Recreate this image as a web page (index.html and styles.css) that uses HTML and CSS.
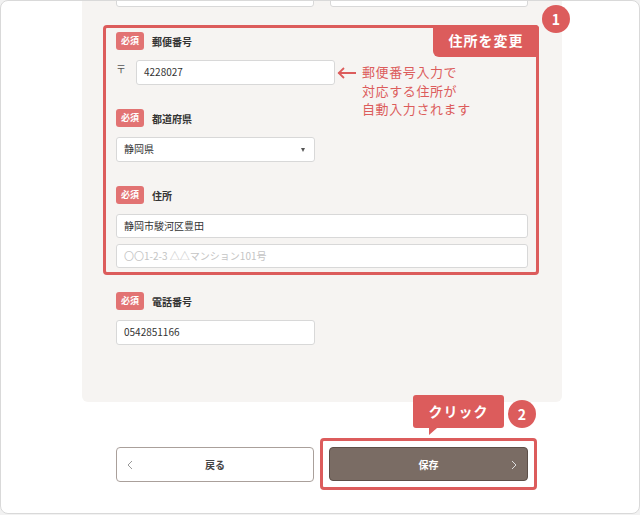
FILE: index.html
```html
<!DOCTYPE html>
<html lang="ja">
<head>
    <meta charset="UTF-8">
    <title>住所を変更</title>
    <link rel="stylesheet" href="styles.css">
</head>
<body>
<div class="card">
    <div class="panel">
        <div class="prev-row">
            <div class="input half"></div>
            <div class="input half"></div>
        </div>

        <div class="highlight">
            <div class="tab">住所を変更</div>
            <div class="step step-one">1</div>

            <div class="field">
                <div class="field-head"><span class="req">必須</span><span class="label">郵便番号</span></div>
                <div class="postal">
                    <span class="mark">〒</span>
                    <div class="input short tall">4228027</div>
                    <div class="note">
                        <svg width="20" height="12" viewBox="0 0 20 12">
                            <line x1="1.5" y1="6" x2="19" y2="6" stroke="#dc5c5c" stroke-width="1.8"/>
                            <polyline points="7,1 1.8,6 7,11" fill="none" stroke="#dc5c5c" stroke-width="1.8"/>
                        </svg>
                        <p>郵便番号入力で<br>対応する住所が<br>自動入力されます</p>
                    </div>
                </div>
            </div>

            <div class="field">
                <div class="field-head"><span class="req">必須</span><span class="label">都道府県</span></div>
                <div class="input short tall select">静岡県</div>
            </div>

            <div class="field">
                <div class="field-head"><span class="req">必須</span><span class="label">住所</span></div>
                <div class="input">静岡市駿河区豊田</div>
                <div class="input placeholder">〇〇1-2-3 △△マンション101号</div>
            </div>
        </div>

        <div class="field tel">
            <div class="field-head"><span class="req">必須</span><span class="label">電話番号</span></div>
            <div class="input short tall">0542851166</div>
        </div>
    </div>

    <div class="actions">
        <button class="btn back">
            <svg class="chev" width="6" height="10" viewBox="0 0 6 10"><polyline points="5,1 1,5 5,9" fill="none" stroke="#999" stroke-width="1"/></svg>
            戻る
        </button>
        <div class="save-wrap">
            <div class="tip">クリック</div>
            <div class="step step-two">2</div>
            <button class="btn save">
                保存
                <svg class="chev" width="6" height="10" viewBox="0 0 6 10"><polyline points="1,1 5,5 1,9" fill="none" stroke="#ddd" stroke-width="1"/></svg>
            </button>
        </div>
    </div>
</div>
</body>
</html>
```

FILE: styles.css
```css
body {
    margin: 0;
    padding: 0;
    background: #f2f2f2;
    font-family: "Noto Sans CJK JP", "Noto Sans", sans-serif;
    color: #333;
}

.card {
    width: 638px;
    height: 512px;
    border: 1px solid #d9d9d9;
    border-radius: 8px;
    background: #fff;
    overflow: hidden;
}

.panel {
    display: flow-root;
    margin-left: 81px;
    width: 412px;
    height: 401px;
    padding: 0 34px;
    background: #f6f4f2;
    border-radius: 0 0 6px 6px;
}

.prev-row {
    display: flex;
    gap: 16px;
    margin-top: -18px;
}

.input {
    box-sizing: border-box;
    height: 24px;
    background: #fff;
    border: 1px solid #d8d8d8;
    border-radius: 3px;
    padding: 0 7px;
    font-size: 10px;
    line-height: 22px;
    color: #333;
}

.input.half {
    width: 198px;
}

.input.short {
    width: 199px;
}

.input.tall {
    height: 25px;
}

.input.placeholder {
    margin-top: 6px;
    color: #c4c4c4;
}

.select {
    position: relative;
}

.select::after {
    content: "";
    position: absolute;
    right: 9px;
    top: 10px;
    border-top: 4px solid #555;
    border-left: 2.5px solid transparent;
    border-right: 2.5px solid transparent;
}

.highlight {
    position: relative;
    margin: 18px -11px 0 -13px;
    padding: 4px 8px 4px 10px;
    border: 3px solid #dc5c5c;
    border-radius: 4px;
}

.tab {
    position: absolute;
    top: -3px;
    right: -3px;
    width: 106px;
    height: 32px;
    background: #dc5c5c;
    color: #fff;
    border-radius: 0 4px 0 6px;
    font-size: 14px;
    font-weight: bold;
    letter-spacing: 1px;
    line-height: 31px;
    text-align: center;
}

.step {
    position: absolute;
    width: 28px;
    height: 28px;
    border-radius: 50%;
    background: #dc5c5c;
    color: #fff;
    font-size: 14px;
    font-weight: bold;
    line-height: 28px;
    text-align: center;
}

.step-one {
    right: -34px;
    top: -23px;
}

.step-two {
    left: 185px;
    top: -41px;
}

.field + .field {
    margin-top: 24px;
}

.field.tel {
    margin-top: 17px;
}

.field-head {
    display: flex;
    align-items: center;
    height: 18px;
    margin-bottom: 10px;
}

.req {
    width: 28px;
    height: 18px;
    border-radius: 3px;
    background: #e27373;
    color: #fff;
    font-size: 9px;
    font-weight: bold;
    line-height: 18px;
    text-align: center;
}

.label {
    margin-left: 8px;
    font-size: 10px;
    font-weight: bold;
    color: #333;
}

.postal {
    position: relative;
    display: flex;
    gap: 10px;
}

.mark {
    width: 10px;
    font-size: 10px;
    color: #555;
    line-height: 18px;
}

.note {
    position: absolute;
    left: 221px;
    top: 3px;
    display: flex;
    gap: 5px;
    color: #dc5c5c;
}

.note svg {
    margin-top: 4px;
}

.note p {
    margin: 0;
    font-size: 13px;
    letter-spacing: 0.6px;
    line-height: 18.5px;
}

.actions {
    display: flex;
    gap: 15px;
    margin: 45px 0 0 115px;
    align-items: flex-start;
}

.btn {
    position: relative;
    box-sizing: border-box;
    height: 35px;
    border-radius: 4px;
    font-family: inherit;
    font-size: 10px;
    font-weight: bold;
    padding: 0;
}

.btn .chev {
    position: absolute;
    top: 12px;
}

.back {
    width: 198px;
    background: #fff;
    border: 1px solid #aaa09b;
    color: #444;
}

.back .chev {
    left: 10px;
}

.save-wrap {
    position: relative;
    margin: -9px;
    padding: 6px;
    border: 3px solid #dc5c5c;
    border-radius: 4px;
}

.save {
    display: block;
    width: 199px;
    height: 34px;
    background: #7a6c64;
    border: 1px solid #5c4f48;
    color: #fff;
}

.save .chev {
    right: 10px;
}

.tip {
    position: absolute;
    left: 90px;
    top: -46px;
    width: 91px;
    height: 33px;
    background: #dc5c5c;
    border-radius: 3px;
    color: #fff;
    font-size: 14px;
    font-weight: bold;
    letter-spacing: 1px;
    line-height: 33px;
    text-align: center;
}

.tip::after {
    content: "";
    position: absolute;
    left: 16px;
    bottom: -7px;
    border-top: 7px solid #dc5c5c;
    border-right: 8px solid transparent;
}
```
